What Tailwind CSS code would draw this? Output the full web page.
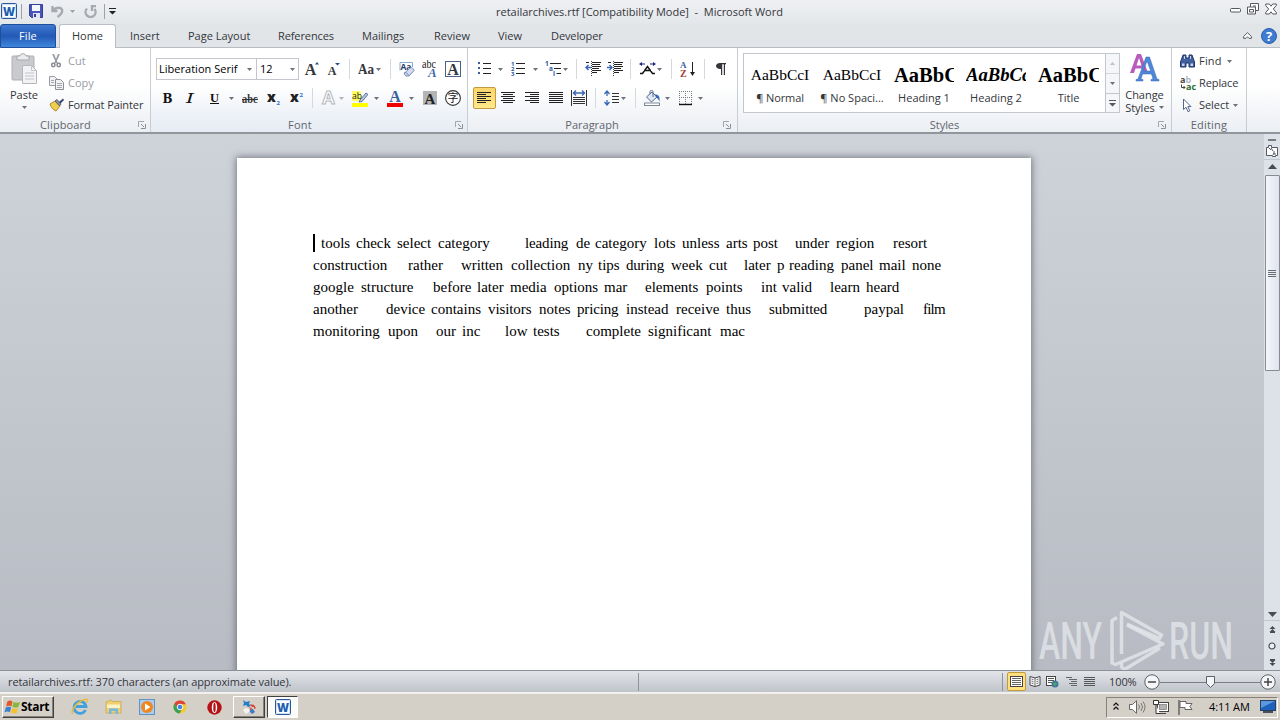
<!DOCTYPE html>
<html lang="en">
<head>
<meta charset="utf-8">
<title>retailarchives.rtf - Microsoft Word</title>
<script src="https://cdn.jsdelivr.net/npm/@tailwindcss/browser@4"></script>
</head>
<body class="w-[1280px] h-[720px] overflow-hidden bg-[#c3c6cd] font-['Open_Sans','Noto_Sans',sans-serif] text-[11px] leading-[14px] text-[#33363b]">
<svg class="hidden">
  <symbol id="dd" viewBox="0 0 5 3"><path d="M0 0h5L2.500 3z" fill="#6d7178"/></symbol>
  <symbol id="launch" viewBox="0 0 8 8"><path d="M.5 6V.5H6" fill="none" stroke="#a3a7ad"/><path d="M3 3l3 3M7.500 3v4.500H3" fill="none" stroke="#8b8f96"/></symbol>
  <symbol id="word" viewBox="0 0 16 16"><rect x=".5" y=".5" width="15" height="15" rx="1" fill="#cfe3f7" stroke="#2b579a"/><rect x="2" y="2" width="12" height="12" fill="#fff"/><text x="2" y="12.500" font-family="Open Sans,sans-serif" font-weight="800" font-size="12" textLength="12" lengthAdjust="spacingAndGlyphs" fill="#1c5fb0">W</text></symbol>
</svg>
<div class="flex flex-col h-full">

  <!-- Title bar -->
  <header class="h-[24px] shrink-0 flex items-start bg-gradient-to-b from-[#eef0f3] to-[#e4e7ea] relative">
    <div class="flex items-center h-[22px] pl-[1px]">
      <svg class="w-[16px] h-[16px]"><use href="#word"/></svg>
      <div class="w-px h-[15px] ml-[4px] bg-[#9da1a8]"></div>
      <svg class="w-[14px] h-[14px] ml-[7px]" viewBox="0 0 14 14"><path d="M.5.5h13v13h-11l-2-2z" fill="#4a55b8" stroke="#353e96"/><path d="M3 1h8v6H3z" fill="#f5f7ff"/><path d="M4 9h7v5H4z" fill="#dfe3f4"/><path d="M5 10h2v3H5z" fill="#353e96"/></svg>
      <svg class="w-[13px] h-[13px] ml-[8px]" viewBox="0 0 13 13"><path d="M1.500 1v5h5M2 5.500C5 2 10 2 11 5S9 10 6.500 12" fill="none" stroke="#a6abb2" stroke-width="2.400"/></svg>
      <svg class="w-[5px] h-[3px] ml-[6px] opacity-60"><use href="#dd"/></svg>
      <svg class="w-[13px] h-[13px] ml-[9px]" viewBox="0 0 13 13"><path d="M3 3.500A5 5 0 1 0 10.500 4M8 6V1h4" fill="none" stroke="#a6abb2" stroke-width="2.400"/></svg>
      <div class="w-px h-[15px] ml-[7px] bg-[#9da1a8]"></div>
      <svg class="w-[7px] h-[7px] ml-[4px]" viewBox="0 0 7 7"><path d="M0 0h7v1H0zM0 3h7L3.500 6.500z" fill="#222"/></svg>
    </div>
    <div class="absolute left-[496px] top-[5px] whitespace-pre -tracking-[0.02px]">retailarchives.rtf [Compatibility Mode]  -  Microsoft Word</div>
    <div class="ml-auto flex items-center pt-[3px] pr-[3px]">
      <svg class="w-[11px] h-[12px]" viewBox="0 0 11 12"><rect x=".5" y="5.500" width="10" height="3.500" rx="1" fill="#fff" stroke="#55595f"/></svg>
      <svg class="w-[12px] h-[12px] ml-[6px]" viewBox="0 0 12 12"><path d="M3.500.5h8v7h-3v3.500h-8v-7h3z" fill="#fff" stroke="#55595f"/><path d="M3.500 4h5v3.500M2.500 6.500h4v2.500h-4zM6 3h3" fill="none" stroke="#55595f"/></svg>
      <svg class="w-[12px] h-[12px] ml-[6px]" viewBox="0 0 12 12"><path d="M.7 1h3.600L6 3.200 7.700 1h3.600v1.500L8.300 6l3 3.500V11H7.700L6 8.800 4.300 11H.7V9.500l3-3.500-3-3.500z" fill="#fff" stroke="#55595f"/></svg>
    </div>
  </header>

  <!-- Ribbon tabs -->
  <nav class="h-[24px] shrink-0 flex bg-[#e2e5e8] border-b border-[#b9bdc4]">
    <div class="w-[56px] h-[24px] rounded-t-[3px] border border-[#1f4f9c] bg-gradient-to-b from-[#3d78cf] via-[#2359b5] to-[#3f86dc] text-white text-center leading-[22px] tracking-[0.1px]">File</div>
    <div class="w-[57px] h-[24px] ml-[3px] rounded-t-[3px] border border-b-0 border-[#b9bdc4] bg-white text-center leading-[22px]">Home</div>
    <div class="w-[30px] ml-[14px] leading-[24px] whitespace-nowrap">Insert</div>
    <div class="w-[62px] ml-[28px] leading-[24px] whitespace-nowrap">Page Layout</div>
    <div class="w-[56px] ml-[28px] leading-[24px] -tracking-[0.1px] whitespace-nowrap">References</div>
    <div class="w-[44px] ml-[28px] leading-[24px] whitespace-nowrap">Mailings</div>
    <div class="w-[36px] ml-[28px] leading-[24px] whitespace-nowrap">Review</div>
    <div class="w-[25px] ml-[28px] leading-[24px] whitespace-nowrap">View</div>
    <div class="w-[52px] ml-[28px] leading-[24px] -tracking-[0.1px] whitespace-nowrap">Developer</div>
    <div class="ml-auto flex items-center pr-[3px]">
      <svg class="w-[9px] h-[7px]" viewBox="0 0 9 7"><path d="M.6 4.500L4.500.7l3.900 3.800v1.800H6L4.500 4.800 3 6.300H.6z" fill="#fff" stroke="#55595f"/></svg>
      <svg class="w-[16px] h-[16px] ml-[9px]" viewBox="0 0 16 16"><circle cx="8" cy="8" r="7.500" fill="#3f7bd0" stroke="#2c5fae"/><text x="8" y="12.500" text-anchor="middle" font-family="Open Sans" font-weight="700" font-size="13" fill="#fff">?</text></svg>
    </div>
  </nav>

  <!-- Ribbon -->
  <section class="h-[86px] shrink-0 flex bg-gradient-to-b from-white from-45% to-[#ebeef3] border-b-2 border-[#92959c]">
    <!-- Clipboard -->
    <div class="w-[151px] shrink-0 flex flex-col border-r border-[#c8ccd3]">
      <div class="flex h-[70px]">
        <div class="w-[48px] flex flex-col items-center pt-[5px]">
          <svg class="w-[28px] h-[31px]" viewBox="0 0 28 31"><rect x="2" y="3" width="22" height="24" rx="1" fill="#c9cacd" stroke="#adafb3"/><path d="M7 5V3h3c0-3 6-3 6 0h3v4H7z" fill="#ececee" stroke="#a5a7ab"/><path d="M12.500 12.500h9l5 5v13h-14z" fill="#f3f3f5" stroke="#b4b6ba"/><path d="M21.500 12.500v5h5M15 20h9M15 23h9M15 26h9" fill="none" stroke="#c3c5c9"/></svg>
          <span class="mt-[4px]">Paste</span>
          <svg class="w-[5px] h-[3px] mt-[4px]"><use href="#dd"/></svg>
        </div>
        <div class="flex flex-col pt-[2px] whitespace-nowrap">
          <div class="flex items-center h-[22px] pl-[3px] text-[#9a9da3]"><svg class="w-[10px] h-[14px]" viewBox="0 0 10 14"><path d="M2 0l4 9M8 0L4 9" stroke="#9a9da3" stroke-width="1.800"/><circle cx="2.300" cy="11" r="1.700" fill="none" stroke="#888b91" stroke-width="1.500"/><circle cx="7.700" cy="11" r="1.700" fill="none" stroke="#888b91" stroke-width="1.500"/></svg><span class="ml-[7px]">Cut</span></div>
          <div class="flex items-center h-[22px] pl-[1px] text-[#9a9da3]"><svg class="w-[15px] h-[14px]" viewBox="0 0 15 14"><path d="M.5.5h5l3 3v6h-8z" fill="#f0f1f3" stroke="#9a9da3"/><path d="M6.500 3.500h5l3 3v7h-8z" fill="#f0f1f3" stroke="#8c8f95"/><path d="M2 4.500h3M2 6.500h3M8 7.500h5M8 9.500h5M8 11.500h5" stroke="#a5a8ae"/></svg><span class="ml-[4px]">Copy</span></div>
          <div class="flex items-center h-[22px] pl-[1px]"><svg class="w-[16px] h-[14px]" viewBox="0 0 16 14"><path d="M1 6l5-3 5 5-4 5C4 12 2 9 1 6z" fill="#f1cf4e" stroke="#b68d28"/><path d="M6 3l2-1.500L12 6l-1.500 2z" fill="#8d93a1" stroke="#3a3f57" stroke-width=".7"/><path d="M10 4l4-3.500L15 2l-3.500 3.500z" fill="#34406f"/></svg><span class="ml-[3px] -tracking-[0.1px]">Format Painter</span></div>
        </div>
      </div>
      <div class="flex items-center h-[14px] text-[#62666d]"><span class="w-[131px] text-center tracking-[0.1px]">Clipboard</span><svg class="w-[8px] h-[8px] ml-[7px]"><use href="#launch"/></svg></div>
    </div>

    <!-- Font -->
    <div class="w-[317px] shrink-0 flex flex-col border-r border-[#c8ccd3] bg-linear-to-b from-transparent from-50% to-[#dfe8f6]/40">
      <div class="flex flex-col h-[70px] pt-[10px] gap-[7px]">
        <div class="flex items-center h-[22px] pl-[5px]">
          <div class="w-[101px] h-[22px] border border-[#c3c6cc] bg-white flex items-center text-black pl-[2px]"><span class="whitespace-nowrap w-[88px] tracking-[0.02px]">Liberation Serif</span><svg class="w-[5px] h-[3px]"><use href="#dd"/></svg></div>
          <div class="w-[43px] h-[22px] -ml-px border border-[#c3c6cc] bg-white flex items-center text-black pl-[3px]"><span class="w-[30px]">12</span><svg class="w-[5px] h-[3px]"><use href="#dd"/></svg></div>
          <svg class="w-[16px] h-[18px] ml-[5px]" viewBox="0 0 16 18"><text x="6.500" y="15" text-anchor="middle" font-family="Liberation Serif" font-weight="700" font-size="16" fill="#33363b">A</text><path d="M11 4.500h4L13 2z" fill="#2e4c86"/></svg>
          <svg class="w-[16px] h-[18px] ml-[6px]" viewBox="0 0 16 18"><text x="6" y="15" text-anchor="middle" font-family="Liberation Serif" font-weight="700" font-size="12" fill="#33363b">A</text><path d="M9 3h5L11.500 5.500z" fill="#2e4c86"/></svg>
          <div class="w-px h-[20px] ml-[7px] bg-[#d5d8dd]"></div>
          <svg class="w-[17px] h-[16px] ml-[8px]" viewBox="0 0 17 16"><text x="0" y="13" font-family="Liberation Serif" font-weight="700" font-size="14" textLength="16" lengthAdjust="spacingAndGlyphs" fill="#33363b">Aa</text></svg>
          <svg class="w-[5px] h-[3px] ml-px"><use href="#dd"/></svg>
          <div class="w-px h-[20px] ml-[9px] bg-[#d5d8dd]"></div>
          <svg class="w-[16px] h-[16px] ml-[8px]" viewBox="0 0 16 16"><path d="M1 9.500V1.500h12.500V6" fill="#fff" stroke="#8aabd6"/><text x="1.500" y="8.500" font-family="Open Sans" font-weight="700" font-size="8" textLength="11" lengthAdjust="spacingAndGlyphs" fill="#223c66">Aa</text><path d="M5 12.500L11 7c1.500-1 4 .5 4 2.500L10 15H7z" fill="#d3dcf1" stroke="#7488b9"/><path d="M5 12c2-1 4 .5 4.500 2.500" fill="none" stroke="#7488b9"/></svg>
          <svg class="w-[16px] h-[18px] ml-[7px]" viewBox="0 0 16 18"><text x="0" y="8" font-family="Liberation Serif" font-size="12" textLength="14" lengthAdjust="spacingAndGlyphs" fill="#222">abc</text><text x="6" y="17" font-family="Liberation Serif" font-style="italic" font-weight="700" font-size="13" fill="#3e69ae">A</text></svg>
          <svg class="w-[16px] h-[16px] ml-[7px]" viewBox="0 0 16 16"><rect x=".5" y=".5" width="15" height="15" fill="#fff" stroke="#4b6388"/><text x="8" y="13.500" text-anchor="middle" font-family="Liberation Serif" font-weight="700" font-size="16" fill="#33363b">A</text></svg>
        </div>
        <div class="flex items-center h-[22px] pl-[11px]">
          <svg class="w-[11px] h-[16px]" viewBox="0 0 11 16"><text x=".5" y="12.500" font-family="DejaVu Serif" font-weight="700" font-size="12" textLength="10" lengthAdjust="spacingAndGlyphs" fill="#111">B</text></svg>
          <svg class="w-[10px] h-[16px] ml-[12px]" viewBox="0 0 10 16"><text x="1" y="12.500" font-family="DejaVu Serif" font-style="italic" font-size="12.500" textLength="8" lengthAdjust="spacingAndGlyphs" fill="#111">I</text></svg>
          <svg class="w-[11px] h-[16px] ml-[14px]" viewBox="0 0 11 16"><text x="1" y="11.500" font-family="Liberation Serif" font-weight="700" font-size="12.500" textLength="9" lengthAdjust="spacingAndGlyphs" fill="#111">U</text><path d="M1 13.500h9" stroke="#111"/></svg>
          <svg class="w-[5px] h-[3px] ml-[9px]"><use href="#dd"/></svg>
          <svg class="w-[16px] h-[16px] ml-[8px]" viewBox="0 0 16 16"><text x="0" y="12.500" font-family="Liberation Serif" font-weight="700" font-size="12" textLength="15.500" lengthAdjust="spacingAndGlyphs" fill="#333">abc</text><path d="M0 9.500h16" stroke="#333"/></svg>
          <svg class="w-[14px] h-[16px] ml-[9px]" viewBox="0 0 14 16"><text x="0" y="12" font-family="Open Sans" font-weight="800" font-size="14" fill="#222">x</text><text x="9.500" y="15" font-family="Open Sans" font-weight="700" font-size="6" fill="#2f6fc4">2</text></svg>
          <svg class="w-[14px] h-[16px] ml-[9px]" viewBox="0 0 14 16"><text x="0" y="12" font-family="Open Sans" font-weight="800" font-size="14" fill="#222">x</text><text x="9.500" y="7" font-family="Open Sans" font-weight="700" font-size="6" fill="#2f6fc4">2</text></svg>
          <div class="w-px h-[20px] ml-[8px] bg-[#d5d8dd]"></div>
          <svg class="w-[16px] h-[16px] ml-[8px]" viewBox="0 0 16 16"><text x="7.500" y="14" text-anchor="middle" font-family="Open Sans" font-weight="700" font-size="18" fill="#fff" stroke="#b5b7bb">A</text></svg>
          <svg class="w-[5px] h-[3px] ml-[2px] opacity-50"><use href="#dd"/></svg>
          <svg class="w-[16px] h-[17px] ml-[8px]" viewBox="0 0 16 17"><rect y="13" width="16" height="4" fill="#ff0"/><rect y="1" width="9" height="10" fill="#ffff66"/><text x="0" y="9" font-family="Open Sans" font-size="9.500" textLength="10" lengthAdjust="spacingAndGlyphs" fill="#111">ab</text><path d="M8 10l6-7 2 1.500-6 7-3 .5z" fill="#b7c8e4" stroke="#46577d" stroke-width=".8"/></svg>
          <svg class="w-[5px] h-[3px] ml-[6px]"><use href="#dd"/></svg>
          <svg class="w-[16px] h-[17px] ml-[8px]" viewBox="0 0 16 17"><rect y="13" width="16" height="4" fill="#f00000"/><text x="8" y="11.500" text-anchor="middle" font-family="Liberation Serif" font-weight="700" font-size="16" fill="#3b5f9e">A</text></svg>
          <svg class="w-[5px] h-[3px] ml-[6px]"><use href="#dd"/></svg>
          <svg class="w-[14px] h-[14px] ml-[9px]" viewBox="0 0 14 14"><rect width="14" height="14" fill="#b4b4b6"/><text x="7" y="12.500" text-anchor="middle" font-family="Liberation Serif" font-weight="700" font-size="15" fill="#222">A</text></svg>
          <svg class="w-[16px] h-[16px] ml-[8px]" viewBox="0 0 16 16"><circle cx="8" cy="8" r="7.400" fill="#fff" stroke="#333" stroke-width="1.100"/><text x="8" y="12" text-anchor="middle" font-family="Noto Sans CJK SC" font-size="11" fill="#222">字</text></svg>
        </div>
      </div>
      <div class="flex items-center h-[14px] text-[#62666d]"><span class="w-[298px] text-center tracking-[0.3px]">Font</span><svg class="w-[8px] h-[8px] ml-[6px]"><use href="#launch"/></svg></div>
    </div>

    <!-- Paragraph -->
    <div class="w-[270px] shrink-0 flex flex-col border-r border-[#c8ccd3]">
      <div class="flex flex-col h-[70px] pt-[10px] gap-[7px]">
        <div class="flex items-center h-[22px] pl-[9px]">
          <svg class="w-[16px] h-[16px]" viewBox="0 0 16 16"><path d="M1 1h2v2H1zM1 6h2v2H1zM1 11h2v2H1z" fill="#3e5f9b"/><path d="M6 2.500h8M6 7.500h8M6 12.500h8" stroke="#222"/></svg>
          <svg class="w-[5px] h-[3px] ml-[5px]"><use href="#dd"/></svg>
          <svg class="w-[16px] h-[16px] ml-[8px]" viewBox="0 0 16 16"><g font-family="Open Sans" font-weight="700" font-size="6" fill="#2f56a3"><text x="0" y="5">1</text><text x="0" y="10">2</text><text x="0" y="15">3</text></g><path d="M5 2.500h9M5 7.500h9M5 12.500h9" stroke="#222"/></svg>
          <svg class="w-[5px] h-[3px] ml-[6px]"><use href="#dd"/></svg>
          <svg class="w-[18px] h-[16px] ml-[7px]" viewBox="0 0 18 16"><g font-family="Open Sans" font-weight="700" font-size="6.500" fill="#2f56a3"><text x="0" y="5">1</text><text x="4" y="10">a</text><text x="8" y="15">i</text></g><path d="M5 2.500h11M9 7.500h7M11.500 12.500H16" stroke="#222"/></svg>
          <svg class="w-[5px] h-[3px]"><use href="#dd"/></svg>
          <div class="w-px h-[20px] ml-[8px] bg-[#d5d8dd]"></div>
          <svg class="w-[16px] h-[16px] ml-[8px]" viewBox="0 0 16 16"><path d="M1 1.500h3M7 1.500h9M7 3.500h8M7 5.500h9M7 7.500h7M7 9.500h9M7 11.500h5" stroke="#222"/><path d="M6 6.500H1M3.500 4L1 6.500 3.500 9" fill="none" stroke="#3867b5" stroke-width="1.400"/><path d="M6.500 0v15" stroke="#444" stroke-dasharray="1 1"/></svg>
          <svg class="w-[16px] h-[16px] ml-[6px]" viewBox="0 0 16 16"><path d="M1 1.500h3M7 1.500h9M7 3.500h8M7 5.500h9M7 7.500h7M7 9.500h9M7 11.500h5" stroke="#222"/><path d="M0 6.500h5M2.500 4L5 6.500 2.500 9" fill="none" stroke="#3867b5" stroke-width="1.400"/><path d="M6.500 0v15" stroke="#444" stroke-dasharray="1 1"/></svg>
          <div class="w-px h-[20px] ml-[7px] bg-[#d5d8dd]"></div>
          <svg class="w-[17px] h-[16px] ml-[8px]" viewBox="0 0 17 16"><path d="M1 12.500h2.500l5-7 5 7H16M5 9.500h7" fill="none" stroke="#111" stroke-width="1.500"/><path d="M0 3l3-2v1.500h3v1H3V5zM17 3l-3-2v1.500h-3v1h3V5z" fill="#1a2280"/></svg>
          <svg class="w-[5px] h-[3px] ml-px"><use href="#dd"/></svg>
          <div class="w-px h-[20px] ml-[9px] bg-[#d5d8dd]"></div>
          <svg class="w-[16px] h-[16px] ml-[8px]" viewBox="0 0 16 16"><text x="0" y="7" font-family="Liberation Serif" font-weight="700" font-size="9" fill="#3c63ad">A</text><text x="0" y="15.500" font-family="Liberation Serif" font-weight="700" font-size="10" fill="#a23b38">Z</text><path d="M12.500 1v11" stroke="#222"/><path d="M10 11h5l-2.500 4z" fill="#222"/></svg>
          <div class="w-px h-[20px] ml-[8px] bg-[#d5d8dd]"></div>
          <svg class="w-[12px] h-[16px] ml-[10px]" viewBox="0 0 12 16"><path d="M5 2h6v1.200H10V14H8.800V3.200H7.200V14H6V8C-.5 8.500-.5 2 5 2z" fill="#33363b"/></svg>
        </div>
        <div class="flex items-center h-[22px] pl-[5px]">
          <div class="w-[23px] h-[22px] rounded-[2px] border border-[#c29a3f] bg-gradient-to-b from-[#fcd56c] to-[#ffe98a] flex items-center justify-center"><svg class="w-[15px] h-[16px]" viewBox="0 0 15 16"><path d="M0 2.500h14M0 4.500h9M0 6.500h14M0 8.500h9M0 10.500h14M0 12.500h9" stroke="#222"/></svg></div>
          <svg class="w-[16px] h-[16px] ml-[4px]" viewBox="0 0 16 16"><path d="M1 2.500h14M3 4.500h10M1 6.500h14M3 8.500h10M1 10.500h14M3 12.500h10" stroke="#222"/></svg>
          <svg class="w-[16px] h-[16px] ml-[8px]" viewBox="0 0 16 16"><path d="M1 2.500h14M6 4.500h9M1 6.500h14M6 8.500h9M1 10.500h14M6 12.500h9" stroke="#222"/></svg>
          <svg class="w-[16px] h-[16px] ml-[8px]" viewBox="0 0 16 16"><path d="M1 2.500h14M1 4.500h14M1 6.500h14M1 8.500h14M1 10.500h14M1 12.500h14" stroke="#222"/></svg>
          <svg class="w-[16px] h-[16px] ml-[7px]" viewBox="0 0 16 16"><path d="M.5 0v16M15.500 0v16M2 7.500h12M2 9.500h12M2 11.500h12M2 13.500h12" stroke="#333"/><path d="M2 3h12M5 .5L2.500 3 5 5.500M11 .5L13.500 3 11 5.500" fill="none" stroke="#3867b5" stroke-width="1.400"/></svg>
          <div class="w-px h-[20px] ml-[8px] bg-[#d5d8dd]"></div>
          <svg class="w-[16px] h-[16px] ml-[8px]" viewBox="0 0 16 16"><path d="M3 1v5M3 10v5M.5 4L3 1l2.500 3M.5 12L3 15l2.500-3" fill="none" stroke="#3867b5" stroke-width="1.300"/><path d="M8 3.500h7M8 6.500h7M8 9.500h7M8 12.500h7" stroke="#333"/></svg>
          <svg class="w-[5px] h-[3px] ml-px"><use href="#dd"/></svg>
          <div class="w-px h-[20px] ml-[9px] bg-[#d5d8dd]"></div>
          <svg class="w-[17px] h-[16px] ml-[8px]" viewBox="0 0 17 16"><path d="M2.500 7L8 2l5 5-5.500 5z" fill="#dfe7f3" stroke="#52698f"/><path d="M6 4V1.500C6 0 9 0 9 1.500V7" fill="none" stroke="#52698f"/><path d="M11 4.500c4 0 5 2.500 4.500 7-1-2-2-3.500-3.500-4z" fill="#3867b5"/><rect x=".5" y="13" width="15" height="2.500" fill="#fff" stroke="#7c8798"/></svg>
          <svg class="w-[5px] h-[3px] ml-[4px]"><use href="#dd"/></svg>
          <svg class="w-[16px] h-[16px] ml-[8px]" viewBox="0 0 16 16"><path d="M1.500 1v13M7.500 1v13M13.500 1v13M1 1.500h13M1 7.500h13" stroke="#777b82" stroke-dasharray="1 1"/><path d="M1 14.500h13" stroke="#111" stroke-width="1.400"/></svg>
          <svg class="w-[5px] h-[3px] ml-[4px]"><use href="#dd"/></svg>
        </div>
      </div>
      <div class="flex items-center h-[14px] text-[#62666d]"><span class="w-[248px] text-center">Paragraph</span><svg class="w-[8px] h-[8px] ml-[7px]"><use href="#launch"/></svg></div>
    </div>

    <!-- Styles -->
    <div class="w-[434px] shrink-0 flex flex-col border-r border-[#c8ccd3]">
      <div class="flex h-[70px] pt-[5px] pl-[5px]">
        <div class="flex w-[377px] h-[60px] border border-[#c3c6cc] bg-white text-center whitespace-nowrap">
          <div class="w-[72px] pt-[12px]"><div class="h-[18px] mx-[4px] font-['Liberation_Serif',serif] text-[15.500px] leading-[18px] text-black">AaBbCcI</div><div class="mt-[7px] -tracking-[0.1px]">¶ Normal</div></div>
          <div class="w-[72px] pt-[12px]"><div class="h-[18px] mx-[4px] font-['Liberation_Serif',serif] text-[15.500px] leading-[18px] text-black">AaBbCcI</div><div class="mt-[7px]">¶ No Spaci...</div></div>
          <div class="w-[72px] pt-[12px]"><div class="h-[18px] mx-[6px] overflow-hidden text-left font-['Liberation_Serif',serif] font-bold text-[20.500px] leading-[18px] text-black">AaBbC</div><div class="mt-[7px]">Heading 1</div></div>
          <div class="w-[72px] pt-[12px]"><div class="h-[18px] mx-[6px] overflow-hidden text-left font-['Liberation_Serif',serif] font-bold italic text-[18.700px] leading-[18px] text-black">AaBbCc</div><div class="mt-[7px]">Heading 2</div></div>
          <div class="w-[73px] pt-[12px]"><div class="h-[18px] mx-[6px] overflow-hidden text-left font-['Liberation_Serif',serif] font-bold text-[20.500px] leading-[18px] text-black">AaBbC</div><div class="mt-[7px]">Title</div></div>
          <div class="flex flex-col w-[14px] border-l border-[#c3c6cc] bg-[#f4f6f8]">
            <div class="h-[20px] flex items-center justify-center border-b border-[#d2d5da]"><svg class="w-[5px] h-[3px] rotate-180 opacity-40"><use href="#dd"/></svg></div>
            <div class="h-[20px] flex items-center justify-center border-b border-[#c3c6cc]"><svg class="w-[5px] h-[3px]"><use href="#dd"/></svg></div>
            <div class="h-[18px] flex items-center justify-center"><svg class="w-[7px] h-[7px]" viewBox="0 0 7 7"><path d="M0 0h7v1H0zM0 3h7L3.500 6.500z" fill="#55595f"/></svg></div>
          </div>
        </div>
        <div class="flex flex-col items-center w-[49px] leading-[13px]">
          <svg class="w-[30px] h-[30px]" viewBox="0 0 30 30"><path d="M0 20L7 1h4l7 19h-4l-1.500-4.500h-7L4 20zM6.500 12.500h5L9 5z" fill="#b95bbd"/><path d="M6 28v-1.500l2-.5L16 4h3.500L27 26l2 .5V28h-8v-1.500l2-.5-1.500-5H12.500l-1.500 5 2 .5V28zM13.300 18h7.400L17 8z" fill="#4e88d8" stroke="#3567b5" stroke-width=".5" fill-rule="evenodd"/></svg>
          <span class="mt-[5px] -tracking-[0.05px]">Change</span>
          <div class="flex items-center gap-[4px]"><span>Styles</span><svg class="w-[5px] h-[3px]"><use href="#dd"/></svg></div>
        </div>
      </div>
      <div class="flex items-center h-[14px] text-[#62666d]"><span class="w-[413px] text-center -tracking-[0.05px]">Styles</span><svg class="w-[8px] h-[8px] ml-[7px]"><use href="#launch"/></svg></div>
    </div>

    <!-- Editing -->
    <div class="w-[75px] shrink-0 flex flex-col border-r border-[#c8ccd3]">
      <div class="flex flex-col h-[70px] pt-[2px] pl-[8px]">
        <div class="flex items-center h-[22px]"><svg class="w-[15px] h-[14px]" viewBox="0 0 15 14"><path d="M3 1h3v3h3V1h3l2.500 7v5H9V9H6v4H.5V8z" fill="#41619e" stroke="#1f3568"/><path d="M2 9.500h2.500V12H2zM10.500 9.500H13V12h-2.500zM4 2h1v3H4zM10 2h1v3h-1z" fill="#c3d3ee"/></svg><span class="ml-[4px] w-[28px] tracking-[0.2px]">Find</span><svg class="w-[5px] h-[3px]"><use href="#dd"/></svg></div>
        <div class="flex items-center h-[22px]"><svg class="w-[17px] h-[17px]" viewBox="0 0 17 17"><g font-family="Open Sans" font-weight="700" font-size="9"><text x="0" y="8" fill="#444">a</text><text x="5.500" y="8" fill="#b5b7bb">b</text><text x="6" y="15" fill="#2d6b34" textLength="10" lengthAdjust="spacingAndGlyphs">ac</text></g><path d="M1.500 9.500v3H5M3.500 11L5 12.500 3.500 14" fill="none" stroke="#444"/></svg><span class="ml-[2px] -tracking-[0.1px]">Replace</span></div>
        <div class="flex items-center h-[22px]"><svg class="w-[15px] h-[15px]" viewBox="0 0 15 15"><path d="M3.500 1v10.500L6 9.300l2 4.400 1.800-.9-2-4.200H11z" fill="#fff" stroke="#53658c"/></svg><span class="ml-[4px] w-[34px] -tracking-[0.05px]">Select</span><svg class="w-[5px] h-[3px]"><use href="#dd"/></svg></div>
      </div>
      <div class="h-[14px] text-center text-[#62666d] tracking-[0.2px]">Editing</div>
    </div>
  </section>

  <!-- Workspace -->
  <main class="h-[536px] shrink-0 flex bg-gradient-to-b from-[#ced2d9] to-[#b8bbc3] relative">
    <div class="w-[1264px] pl-[237px] pt-[24px] overflow-hidden">
      <article class="w-[794px] h-[520px] bg-white shadow-[0_0_7px_1px_rgba(60,64,72,0.6)] pl-[76px] pt-[74px] font-['Liberation_Serif',serif] text-[15px] leading-[22px] text-black whitespace-nowrap">
        <p class="flex h-[22px]"><span class="w-[2px] h-[18px] mt-[2px] mr-[6px] bg-black"></span><span class="w-[35px]">tools</span><span class="w-[41px]">check</span><span class="w-[41px]">select</span><span class="w-[87px]">category</span><span class="w-[51px] -tracking-[0.15px]">leading</span><span class="w-[19px]">de</span><span class="w-[59px]">category</span><span class="w-[28px]">lots</span><span class="w-[44px]">unless</span><span class="w-[27px]">arts</span><span class="w-[42px]">post</span><span class="w-[41px]">under</span><span class="w-[57px]">region</span><span>resort</span></p>
        <p class="flex h-[22px]"><span class="w-[95px]">construction</span><span class="w-[53px]">rather</span><span class="w-[50px] -tracking-[0.1px]">written</span><span class="w-[67px]">collection</span><span class="w-[20px]">ny</span><span class="w-[28px]">tips</span><span class="w-[45px] -tracking-[0.2px]">during</span><span class="w-[38px]">week</span><span class="w-[35px]">cut</span><span class="w-[33px]">later</span><span class="w-[12px]">p</span><span class="w-[52px]">reading</span><span class="w-[38px]">panel</span><span class="w-[33px]">mail</span><span>none</span></p>
        <p class="flex h-[22px]"><span class="w-[48px]">google</span><span class="w-[72px]">structure</span><span class="w-[44px]">before</span><span class="w-[33px]">later</span><span class="w-[44px]">media</span><span class="w-[50px]">options</span><span class="w-[41px]">mar</span><span class="w-[61px]">elements</span><span class="w-[55px]">points</span><span class="w-[21px]">int</span><span class="w-[48px]">valid</span><span class="w-[36px]">learn</span><span>heard</span></p>
        <p class="flex h-[22px]"><span class="w-[73px]">another</span><span class="w-[45px]">device</span><span class="w-[57px]">contains</span><span class="w-[51px] -tracking-[0.1px]">visitors</span><span class="w-[38px]">notes</span><span class="w-[49px] -tracking-[0.15px]">pricing</span><span class="w-[50px]">instead</span><span class="w-[50px]">receive</span><span class="w-[43px]">thus</span><span class="w-[95px] -tracking-[0.1px]">submitted</span><span class="w-[59px]">paypal</span><span class="-tracking-[0.8px]">film</span></p>
        <p class="flex h-[22px]"><span class="w-[75px]">monitoring</span><span class="w-[48px]">upon</span><span class="w-[26px]">our</span><span class="w-[43px]">inc</span><span class="w-[28px]">low</span><span class="w-[53px]">tests</span><span class="w-[62px]">complete</span><span class="w-[72px]">significant</span><span>mac</span></p>
      </article>
    </div>
    <aside class="w-[16px] flex flex-col items-center bg-[#dde1e8]">
      <div class="w-[8px] h-[2px] mt-[5px] bg-[#777b83]"></div>
      <svg class="w-[13px] h-[12px] mt-[4px]" viewBox="0 0 13 12"><path d="M.5 2.500h2v-2h3v2h6v8h-2v1h-3v-1h-6z" fill="#fff" stroke="#555a64"/><path d="M3 3l2 2M5 3l2 3M8 8l-1 2M8 6v3h2" fill="none" stroke="#555a64"/></svg>
      <div class="w-full h-[18px] mt-[2px] border-t border-[#c2c6ce] flex items-start pt-[4px] justify-center"><svg class="w-[9px] h-[5px]" viewBox="0 0 9 5"><path d="M0 5h9L4.500 0z" fill="#464b55"/></svg></div>
      <div class="w-[15px] h-[196px] -mt-[2px] border border-[#868b96] rounded-[1px] bg-gradient-to-r from-[#f5f7fb] to-[#dfe3eb] flex flex-col items-center justify-center gap-[1px]"><i class="block w-[8px] h-px bg-[#666b75]"></i><i class="block w-[8px] h-px bg-[#666b75]"></i><i class="block w-[8px] h-px bg-[#666b75]"></i><i class="block w-[8px] h-px bg-[#666b75]"></i></div>
      <svg class="w-[9px] h-[5px] mt-auto mb-[3px]" viewBox="0 0 9 5"><path d="M0 0h9L4.500 5z" fill="#464b55"/></svg>
      <div class="w-full h-[50px] border-t border-[#c2c6ce] flex flex-col items-center justify-between pt-[5px] pb-[4px]">
        <svg class="w-[7px] h-[7px]" viewBox="0 0 7 7"><path d="M3.500 0L6.500 3h-6zM3.500 3L6.500 6h-6zM1 6h5v1H1z" fill="#464b55"/></svg>
        <svg class="w-[8px] h-[8px]" viewBox="0 0 8 8"><circle cx="4" cy="4" r="3" fill="#eef0f4" stroke="#464b55" stroke-width="1.200"/></svg>
        <svg class="w-[7px] h-[7px]" viewBox="0 0 7 7"><path d="M3.500 4L6.500 1h-6zM3.500 7L6.500 4h-6zM1 0h5v1H1z" fill="#464b55"/></svg>
      </div>
    </aside>
    <!-- Watermark -->
    <svg class="absolute left-[1036px] top-[472px] w-[200px] h-[64px]" viewBox="0 0 200 64">
      <g font-family="Roboto,sans-serif" font-weight="500" font-size="52" fill="#e3e6ea" fill-opacity=".8"><text x="3" y="53" textLength="63" lengthAdjust="spacingAndGlyphs">ANY</text><text x="133" y="53" textLength="64" lengthAdjust="spacingAndGlyphs">RUN</text></g>
      <g fill="none" stroke="#e3e6ea" stroke-opacity=".8" stroke-width="3.500" stroke-linejoin="round"><path d="M85.500 48V6.500L125.500 29l-2 3.500L91 18"/><path d="M81 11.500l-5 3V57l3.500 1.500L127 38 91 19"/><path d="M85.500 57v4l3 2.500L124 42"/></g>
    </svg>
  </main>

  <!-- Status bar -->
  <footer class="h-[22px] shrink-0 flex items-center bg-gradient-to-b from-[#e3e5e9] to-[#bfc3ca] border-t border-[#8c9098]">
    <span class="w-[630px] ml-[8px] whitespace-nowrap -tracking-[0.09px]">retailarchives.rtf: 370 characters (an approximate value).</span>
    <div class="w-px h-[18px] bg-[#8e939c]"></div>
    <div class="w-px h-[18px] ml-[363px] bg-[#8e939c]"></div>
    <div class="w-[19px] h-[19px] ml-[4px] border border-[#c29a3f] bg-[#ffe07c] flex items-center justify-center rounded-[2px]"><svg class="w-[13px] h-[11px]" viewBox="0 0 13 11"><rect x=".5" y=".5" width="12" height="10" fill="#fff" stroke="#444"/><path d="M2 2.500h9M2 4.500h9M2 6.500h9M2 8.500h9" stroke="#666"/></svg></div>
    <svg class="w-[12px] h-[11px] ml-[3px]" viewBox="0 0 12 11"><path d="M6 2L1 .5v8.500l5 1.500 5-1.500V.5z" fill="#fff" stroke="#444"/><path d="M6 2v8M2.500 3l2 .7M2.500 5l2 .7M2.500 7l2 .7M9.500 3l-2 .7M9.500 5l-2 .7M9.500 7l-2 .7" stroke="#444" stroke-width=".8"/></svg>
    <svg class="w-[13px] h-[12px] ml-[5px]" viewBox="0 0 13 12"><rect x=".5" y=".5" width="9" height="9" fill="#fff" stroke="#444"/><path d="M2 2.500h6M2 4.500h6M2 6.500h4" stroke="#555"/><circle cx="9" cy="8" r="3.500" fill="#3f7a9c"/><path d="M7 8l2-2 2 2-2 2z" fill="#59a06b"/></svg>
    <svg class="w-[11px] h-[10px] ml-[7px]" viewBox="0 0 11 10"><path d="M0 .5h6M3 2.500h8M5 4.500h6M3 6.500h8M5 8.500h6" stroke="#666"/></svg>
    <svg class="w-[11px] h-[10px] ml-[7px]" viewBox="0 0 11 10"><path d="M0 .5h11M0 2.500h11M0 4.500h11M0 6.500h11M0 8.500h11" stroke="#555"/></svg>
    <span class="w-[28px] ml-[14px] -tracking-[0.1px]">100%</span>
    <svg class="w-[16px] h-[16px] ml-[7px]" viewBox="0 0 16 16"><circle cx="8" cy="8" r="7.200" fill="#f5f6f8" stroke="#5b5f67"/><path d="M4 8h8" stroke="#444" stroke-width="1.500"/></svg>
    <svg class="w-[100px] h-[14px]" viewBox="0 0 100 14"><path d="M0 7.500h100" stroke="#777c85"/><path d="M46.500 1.500h8v7l-4 4-4-4z" fill="#f5f6f8" stroke="#5b5f67"/></svg>
    <svg class="w-[16px] h-[16px]" viewBox="0 0 16 16"><circle cx="8" cy="8" r="7.200" fill="#f5f6f8" stroke="#5b5f67"/><path d="M4 8h8M8 4v8" stroke="#444" stroke-width="1.500"/></svg>
  </footer>

  <!-- Taskbar -->
  <div class="h-[28px] shrink-0 flex items-center bg-[#d5d0c7] border-t-2 border-[#f2f0ec] text-black">
    <button class="w-[52px] h-[22px] ml-[2px] bg-[#d5d0c7] border border-t-white border-l-white border-b-[#404040] border-r-[#404040] shadow-[inset_-1px_-1px_0_#87837b] flex items-center pl-px"><svg class="w-[17px] h-[16px]" viewBox="0 0 16 14"><path d="M3 2c2-1.500 3.500-1.500 5 0L7 6.500C5.500 5.500 4 5.500 2 6.500z" fill="#e05a2c"/><path d="M9 2.300c2 1 3.500 1 6 0L13.500 7C11.500 8 10 7.500 8 6.700z" fill="#86b83a"/><path d="M1.700 7.500c2-1 3.300-1 5 0L5.500 12C4 11 2.500 11 .5 12z" fill="#3c7ed0"/><path d="M7.700 7.900c2 1 3.500 1 5.500.2L12 12.700c-2 .8-3.500.5-5.500-.5z" fill="#f4c22e"/></svg><b class="text-[12px] -tracking-[0.3px]">Start</b></button>
    <svg class="w-[18px] h-[18px] ml-[17px]" viewBox="0 0 18 18"><path d="M14.500 12A6 6 0 1 1 15 8.500H5" fill="none" stroke="#42a0dc" stroke-width="2.800"/><path d="M2 16C-1 14 5 5 11 2.500s6-1 4.500 2" fill="none" stroke="#e8bb37" stroke-width="1.400"/></svg>
    <svg class="w-[17px] h-[16px] ml-[16px]" viewBox="0 0 17 16"><path d="M1 3l5-2 2 1.500h8V14H1z" fill="#edcf72" stroke="#c9a544" stroke-width=".7"/><path d="M2 5.500h13V9H2z" fill="#fbf2c6"/><path d="M4 15V9.500h9V15h-2.500v-3h-4v3z" fill="#75b9de"/></svg>
    <svg class="w-[16px] h-[16px] ml-[17px]" viewBox="0 0 16 16"><rect x=".5" y=".5" width="15" height="15" fill="#a8cdef" stroke="#5f93c7"/><circle cx="8" cy="8" r="6" fill="#ef8620"/><path d="M6 4.500L11.500 8 6 11.500z" fill="#fff"/></svg>
    <svg class="w-[14px] h-[14px] ml-[18px]" viewBox="0 0 15 15"><circle cx="7.500" cy="7.500" r="7" fill="#f7c92e"/><path d="M1.400 4A7 7 0 0 1 13.800 4.500H7.500l-3 4z" fill="#db4437"/><path d="M1.400 4A7 7 0 0 0 7 14.500L10 9l-5-.5z" fill="#39a058"/><circle cx="7.500" cy="7.500" r="3" fill="#4285e0" stroke="#fff"/></svg>
    <svg class="w-[15px] h-[15px] ml-[20px]" viewBox="0 0 15 15"><circle cx="7.500" cy="7.500" r="7.200" fill="#b51218"/><ellipse cx="7.500" cy="7.500" rx="2.700" ry="5.500" fill="#fff"/><ellipse cx="7.500" cy="7.500" rx="1.200" ry="4.700" fill="#b51218"/></svg>
    <div class="w-[32px] h-[22px] ml-[11px] border border-t-white border-l-white border-b-[#404040] border-r-[#404040] shadow-[inset_-1px_-1px_0_#87837b] flex items-center justify-center"><svg class="w-[16px] h-[16px]" viewBox="0 0 16 16"><path d="M2 1l3 2 4-1-1 3 2 2-3 1-2-2-3 1 1-3z" fill="#2380c6"/><path d="M9 5l4 1 2 3-2 1v-2h-2z" fill="#d94236"/><path d="M9 9l3 1 2 3-3 2-2-2z" fill="#3c7ecb"/><path d="M2 11l3-2 3 1v3l-3 2z" fill="#f4f4f3"/><path d="M8 8l3 1-1 3z" fill="#e9584b"/></svg></div>
    <div class="w-[31px] h-[22px] ml-[2px] border border-t-[#404040] border-l-[#404040] border-b-white border-r-white bg-[#fbfbfa] flex items-center justify-center"><svg class="w-[16px] h-[16px]"><use href="#word"/></svg></div>
    <div class="ml-auto w-[172px] h-[21px] mr-[2px] border border-t-[#87837b] border-l-[#87837b] border-b-white border-r-white flex items-center">
      <svg class="w-[6px] h-[8px] ml-[6px] -mt-[3px]" viewBox="0 0 6 8"><path d="M.5 3.500L3 1l2.500 2.500M.5 7.500L3 5l2.500 2.500" fill="none" stroke="#111" stroke-width="1.200"/></svg>
      <svg class="w-[17px] h-[14px] ml-[10px]" viewBox="0 0 17 14"><path d="M.5 4.500h3L7.500.7v12.600L3.500 9.500h-3z" fill="#fff" stroke="#666"/><path d="M9.500 4.500q2 2.500 0 5M12 3q3 4 0 8M14 1.500q4 5.500 0 11" fill="none" stroke="#777"/></svg>
      <svg class="w-[16px] h-[15px] ml-[7px]" viewBox="0 0 16 15"><rect x="4.500" y="2.500" width="11" height="9" fill="#fff" stroke="#444"/><rect x="6.500" y="4.500" width="7" height="5" fill="#b5b3ae" stroke="#666" stroke-width=".6"/><path d="M7 13.500h6" stroke="#444"/><path d="M.5.5h5v4h-5zM3 5v8.500h4" fill="#fff" stroke="#333"/></svg>
      <svg class="w-[16px] h-[15px] ml-[8px]" viewBox="0 0 16 15"><path d="M2 0v15" stroke="#666" stroke-width="1.500"/><path d="M3 1.500h6v2h6l-2 3 2 3H8v-2H3z" fill="#fff" stroke="#666"/></svg>
      <span class="ml-[16px] w-[41px] whitespace-nowrap -tracking-[0.1px]">4:11 AM</span>
      <svg class="w-[16px] h-[14px] ml-[10px]" viewBox="0 0 16 14"><rect x=".5" y=".5" width="15" height="10" fill="#1f62bd" stroke="#24415f"/><path d="M1 1h14L1 8z" fill="#5b98e0"/><path d="M3 13h10v-2H3z" fill="#49505a"/></svg>
    </div>
  </div>
</div>
</body>
</html>
